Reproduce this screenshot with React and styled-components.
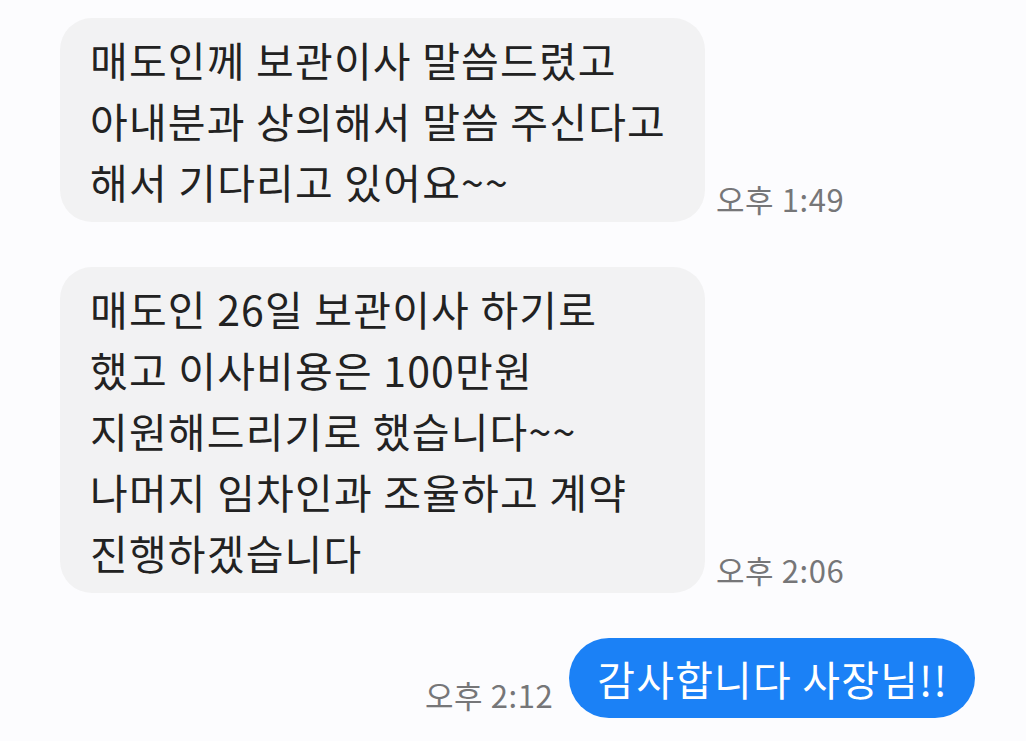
import React from "react";
import styled, { createGlobalStyle } from "styled-components";

const Global = createGlobalStyle`
  html, body { margin: 0; padding: 0; background: #fcfcfe; }
  body { font-family: "Noto Sans CJK KR", "Noto Sans", sans-serif; }
`;

const Screen = styled.div`
  width: 1026px;
  height: 741px;
  overflow: hidden;
  background: #fcfcfe;
  display: flex;
  flex-direction: column;
  gap: 45px;
  padding: 18px 51px 0 60px;
  box-sizing: border-box;
`;

const Row = styled.div`
  display: flex;
  align-items: flex-end;
  justify-content: ${(p) => (p.$mine ? "flex-end" : "flex-start")};
  gap: ${(p) => (p.$mine ? "16px" : "11px")};
`;

const Bubble = styled.div`
  width: 645px;
  box-sizing: border-box;
  background: #f2f2f3;
  color: #222;
  border-radius: 32px;
  padding: 11px 30px 10px;
  font-size: 41px;
  line-height: 61px;
  letter-spacing: 1.2px;
  white-space: pre-line;
`;

const MyBubble = styled.div`
  background: #1b81f6;
  color: #fff;
  border-radius: 40px;
  height: 80px;
  padding: 0 27px 0 28px;
  display: flex;
  align-items: center;
  font-size: 41px;
  letter-spacing: 1.2px;
`;

const Time = styled.div`
  color: #767678;
  font-size: 31px;
  line-height: 40px;
  letter-spacing: 0.6px;
  white-space: nowrap;
  padding-bottom: ${(p) => p.$pb || "3px"};
`;

export default function App() {
  return (
    <>
      <Global />
      <Screen>
        <Row>
          <Bubble>{"매도인께 보관이사 말씀드렸고\n아내분과 상의해서 말씀 주신다고\n해서 기다리고 있어요~~"}</Bubble>
          <Time>오후 1:49</Time>
        </Row>
        <Row>
          <Bubble>{"매도인 26일 보관이사 하기로\n했고 이사비용은 100만원\n지원해드리기로 했습니다~~\n나머지 임차인과 조율하고 계약\n진행하겠습니다"}</Bubble>
          <Time>오후 2:06</Time>
        </Row>
        <Row $mine>
          <Time $pb="3px">오후 2:12</Time>
          <MyBubble>감사합니다 사장님!!</MyBubble>
        </Row>
      </Screen>
    </>
  );
}
